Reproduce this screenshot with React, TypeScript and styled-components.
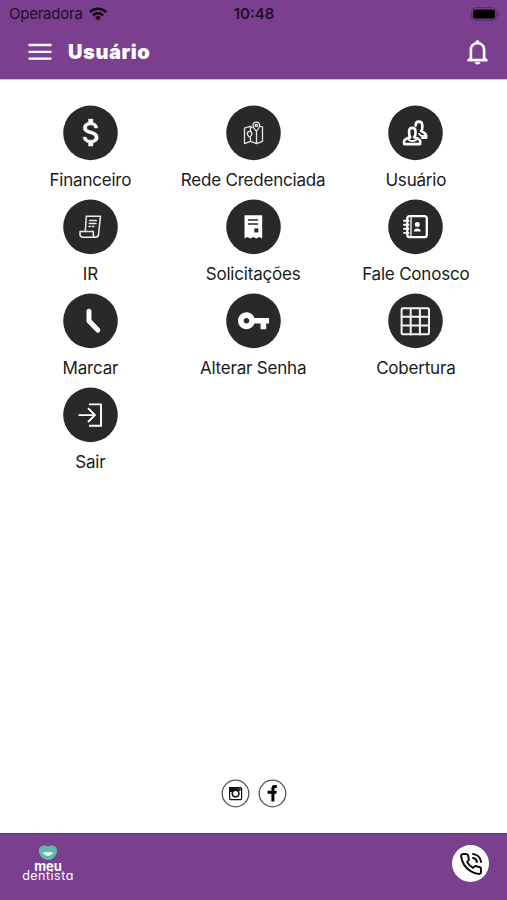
import React from "react";
import styled, { createGlobalStyle } from "styled-components";

const PURPLE = "#7b3f90";

const GlobalStyle = createGlobalStyle`
  * { box-sizing: border-box; }
  body { margin: 0; background: #fff; font-family: Inter, "Liberation Sans", sans-serif; }
  svg { display: block; flex: none; }
`;

const Screen = styled.div`
  width: 507px;
  height: 900px;
  display: flex;
  flex-direction: column;
  background: #fff;
  overflow: hidden;
`;

const Header = styled.header`
  height: 79px;
  flex: none;
  background: ${PURPLE};
  box-shadow: 0 1px 0 #d3bedb;
`;

const StatusBar = styled.div`
  height: 28px;
  padding: 0 7px 0 9px;
  display: grid;
  grid-template-columns: 1fr auto 1fr;
  align-items: center;
  color: #1f0d27;
`;

const Carrier = styled.div`
  display: flex;
  align-items: center;
  gap: 6px;
  font-size: 15px;
  line-height: 28px;
  letter-spacing: -0.24px;
`;

const Clock = styled.div`
  padding-right: 1px;
  font-size: 15px;
  font-weight: 600;
  line-height: 28px;
`;

const BatterySlot = styled.div`
  display: flex;
  justify-content: flex-end;
`;

const NavBar = styled.div`
  height: 48px;
  padding: 0 16px 0 28px;
  display: flex;
  align-items: center;
`;

const Title = styled.h1`
  flex: 1;
  margin: 0 0 0 16px;
  color: #fff;
  font-size: 20px;
  font-weight: 900;
  line-height: 24px;
  letter-spacing: 0.6px;
`;

const Menu = styled.main`
  flex: 1;
  padding: 26px 9.8px 0 9px;
  display: grid;
  grid-template-columns: repeat(3, 1fr);
  grid-auto-rows: 94px;
  align-content: start;
`;

const MenuItem = styled.div`
  display: flex;
  flex-direction: column;
  align-items: center;
`;

const Label = styled.span`
  margin-top: 7px;
  font-size: 17px;
  line-height: 24px;
  white-space: nowrap;
  color: #1a1a1a;
  letter-spacing: -0.2px;
`;

const Social = styled.div`
  display: flex;
  justify-content: center;
  gap: 8px;
  height: 54px;
  flex: none;
  padding-left: 1px;
`;

const Footer = styled.footer`
  height: 67px;
  flex: none;
  background: ${PURPLE};
  box-shadow: inset 0 1px 0 #6b3282;
  padding: 12px 18px 0 22px;
  display: flex;
  justify-content: space-between;
  align-items: flex-start;
`;

const Brand = styled.div`
  width: 52px;
  display: flex;
  flex-direction: column;
  align-items: center;
  color: #fff;
`;

const BrandLine = styled.span<{ $bold?: boolean }>`
  font-family: Inter, sans-serif;
  font-feature-settings: "cv11";
  font-size: ${(p) => (p.$bold ? 13 : 12.5)}px;
  font-weight: ${(p) => (p.$bold ? 700 : 400)};
  line-height: 10px;
  letter-spacing: ${(p) => (p.$bold ? 0 : 0.5)}px;
  white-space: nowrap;
`;

const CallButton = styled.button`
  width: 37px;
  height: 37px;
  padding: 0;
  border: 0;
  border-radius: 50%;
  background: #fff;
  display: flex;
  align-items: center;
  justify-content: center;
`;

const Disc = ({ children }: { children: React.ReactNode }) => (
  <svg width="55" height="56" viewBox="0 -0.4 55 56" fill="none" stroke="#fff" strokeWidth="1.3" strokeLinecap="round" strokeLinejoin="round">
    <circle cx="27.5" cy="27.5" r="27.3" fill="#292929" stroke="none" />
    {children}
  </svg>
);

const items: { label: string; icon: React.ReactNode }[] = [
  {
    label: "Financeiro",
    icon: (
      <path
        fill="#fff"
        strokeWidth="0.25"
        transform="translate(10.5 9.2) scale(1.5)"
        d="M11.8 10.9c-2.27-.59-3-1.2-3-2.15 0-1.09 1.01-1.85 2.7-1.85 1.78 0 2.44.85 2.5 2.1h2.21c-.07-1.72-1.12-3.3-3.21-3.81V3h-3v2.16c-1.94.42-3.5 1.68-3.5 3.61 0 2.31 1.91 3.46 4.7 4.13 2.5.6 3 1.48 3 2.41 0 .69-.49 1.79-2.7 1.79-2.06 0-2.87-.92-2.98-2.1h-2.2c.12 2.19 1.76 3.42 3.68 3.83V21h3v-2.15c1.95-.37 3.5-1.5 3.5-3.55 0-2.84-2.43-3.81-4.7-4.4z"
      />
    ),
  },
  {
    label: "Rede Credenciada",
    icon: (
      <g stroke="#e4e4e4" strokeWidth="1.3">
        <path d="M26 22l-2-1-5.5 1.8v15.4l6-2.2 6 2.2 6-2.2V21.5l-2-.5M24.5 21.5v4M24.5 32.5V36M30.5 26v12" />
        <path d="M30.3 25.8c-1.7-2-3.3-3.6-3.3-5.8a3.3 3.3 0 0 1 6.6 0c0 2.2-1.6 3.8-3.3 5.8z" />
        <circle cx="30.3" cy="20.2" r="1.1" />
        <path d="M23.6 32c-1.2-1.4-2.3-2.2-2.3-3.7a2.3 2.3 0 0 1 4.6 0c0 1.5-1.1 2.3-2.3 3.7z" />
      </g>
    ),
  },
  {
    label: "Usuário",
    icon: (
      <g strokeWidth="2.6">
        <path d="M27.6 20.2c0-2.7 1.4-4 3.3-4s3.4 1.4 3.4 4v2.2c0 1.6-.5 2.5-1.2 3.4 2.7 1.3 5 1.8 5 4.2v2.4h-3.8" />
        <path d="M31 28.5l2.2 2h4" strokeWidth="1.8" />
        <path d="M21.1 26.2c0-2.5 1.3-3.7 3.2-3.7s3.2 1.2 3.2 3.7v2c0 1.6-.5 2.7-1.3 3.6 3.6 1.3 6 1.8 6 4.1v2.8H16.1v-2.8c0-2.3 2.6-2.8 6.2-4.1-.8-.9-1.2-2-1.2-3.6z" />
        <path d="M20.5 34.3c2 1.8 6 1.8 8 0" strokeWidth="1.8" />
      </g>
    ),
  },
  {
    label: "IR",
    icon: (
      <g stroke="#eee" strokeWidth="1.5">
        <path d="M22.3 31.8l1-15H37.5l-2 18.5c-.2 1.8-1.3 2.5-3 2.5H20c-2 0-3-1-3-3v-2.6h13.3v3.3c0 1.5.7 2.3 2.2 2.3" />
        <path d="M26.5 21h6.8M26.2 24h6.8M26 27.2h1.3M29.3 27.2h1.5" />
      </g>
    ),
  },
  {
    label: "Solicitações",
    icon: (
      <>
        <path fill="#fff" stroke="none" d="M18.5 15.8h17.7V39l-3-1.5-3 1.5-2.9-1.5-2.9 1.5-3-1.5-2.9 1.5z" />
        <path d="M22.5 20.5h9M22.5 24.5h9" stroke="#292929" strokeWidth="1.5" />
        <path fill="#292929" stroke="none" d="M28.3 29h4v4h-4z" />
      </>
    ),
  },
  {
    label: "Fale Conosco",
    icon: (
      <>
        <rect x="19.3" y="16.8" width="19.5" height="21" rx="2.5" strokeWidth="2.3" />
        <path d="M16 21.3h4.5M16 25.3h4.5M16 29.4h4.5M16 33.5h4.5" strokeWidth="1.9" />
        <path d="M23 17v21" strokeWidth="1.3" />
        <circle cx="29.3" cy="25.2" r="2.5" fill="#fff" stroke="none" />
        <path d="M25.9 32c0-2.2 1.3-3 3.4-3s3.4.8 3.4 3z" fill="#fff" stroke="none" />
      </>
    ),
  },
  {
    label: "Marcar",
    icon: <path d="M26 17.8v9.7l8.8 9.2" strokeWidth="5" />,
  },
  {
    label: "Alterar Senha",
    icon: (
      <path
        fill="#fff"
        stroke="none"
        transform="translate(10.6 10.4) scale(1.41)"
        d="M12.65 10C11.83 7.67 9.61 6 7 6c-3.31 0-6 2.69-6 6s2.69 6 6 6c2.61 0 4.83-1.67 5.65-4H17v4h4v-4h2v-4H12.65zM7 14c-1.1 0-2-.9-2-2s.9-2 2-2 2 .9 2 2-.9 2-2 2z"
      />
    ),
  },
  {
    label: "Cobertura",
    icon: (
      <g strokeWidth="2" stroke="#f4f4f4">
        <rect x="13.6" y="14.8" width="27.4" height="26" rx="1.2" />
        <path d="M22.7 15v26M31.9 15v26M13.6 23.3H41M13.6 32.1H41" />
      </g>
    ),
  },
  {
    label: "Sair",
    icon: (
      <g strokeWidth="1.9" strokeLinecap="butt" strokeLinejoin="miter">
        <path d="M26 17h12v21.4H26" />
        <path d="M15.5 27.7H32M25 20.8l6.9 6.9-6.9 6.9" />
      </g>
    ),
  },
];

export default function App() {
  return (
    <>
      <GlobalStyle />
      <Screen>
        <Header>
          <StatusBar>
            <Carrier>
              Operadora
              <svg width="18" height="14" viewBox="0 0 18 14" fill="none" stroke="#100315" strokeWidth="2.5">
                <path d="M.8 5.2a11.7 11.7 0 0 1 16.4 0M3.8 8.4a7.5 7.5 0 0 1 10.4 0" />
                <path d="M9 13.4l-2.9-3a4.1 4.1 0 0 1 5.8 0z" fill="#100315" stroke="none" />
              </svg>
            </Carrier>
            <Clock>10:48</Clock>
            <BatterySlot>
              <svg width="30" height="14" viewBox="0 0 30 14">
                <rect x="1.4" y=".7" width="25" height="12.4" rx="3.8" fill="none" stroke="#552765" strokeWidth="1" />
                <rect x="3" y="2.4" width="22" height="9" rx="2.2" fill="#000" />
                <path d="M28 5v4q1.6-.6 1.6-2T28 5z" fill="#552765" />
              </svg>
            </BatterySlot>
          </StatusBar>
          <NavBar>
            <svg width="24" height="18" viewBox="0 0 24 18" stroke="#fff" strokeWidth="2.3">
              <path d="M.5 2h23M.5 8.8h23M.5 15.6h23" />
            </svg>
            <Title>Usuário</Title>
            <svg width="27" height="27" viewBox="0 0 27 27">
              <path
                fill="#fff"
                stroke="#fff"
                strokeWidth="0.4"
                fillRule="evenodd"
                d="M12 3.3V2.7a1.5 1.5 0 0 1 3 0v.6c4 .7 6.2 3.6 6.2 7.7v7.7l2.2 1.8v1.7H3.6v-1.7l2.2-1.8V11c0-4.1 2.2-7 6.2-7.7zM13.5 5.3C9.9 5.3 8 7.5 8 11v8.9h11V11c0-3.5-1.9-5.7-5.5-5.7zM10.9 23.3h5.2a2.6 2 0 0 1-5.2 0z"
              />
            </svg>
          </NavBar>
        </Header>
        <Menu>
          {items.map((item) => (
            <MenuItem key={item.label}>
              <Disc>{item.icon}</Disc>
              <Label>{item.label}</Label>
            </MenuItem>
          ))}
        </Menu>
        <Social>
          <svg width="29" height="29" viewBox="0 0 29 29">
            <circle cx="14.5" cy="14.5" r="13.3" fill="#fff" stroke="#555" strokeWidth="1.3" />
            <rect x="8.6" y="8.6" width="12" height="12" rx="1" fill="#fff" stroke="#111" strokeWidth="1.2" />
            <path d="M8 8h9v5H8z" fill="#111" />
            <circle cx="14.6" cy="14.6" r="3.3" fill="#fff" stroke="#111" strokeWidth="1.6" />
            <rect x="17.2" y="9.3" width="2.5" height="2.5" fill="#111" />
          </svg>
          <svg width="29" height="29" viewBox="0 0 29 29">
            <circle cx="14.5" cy="14.5" r="13.3" fill="#fff" stroke="#555" strokeWidth="1.3" />
            <path
              d="M18.8 7.6h-1.8c-1.3 0-2.1.7-2.1 1.9v2.6M9.6 13.3h9M14.9 12v10.4"
              fill="none"
              stroke="#000"
              strokeWidth="3"
            />
          </svg>
        </Social>
        <Footer>
          <Brand>
            <svg width="20" height="16" viewBox="0 0 20 16">
              <path d="M10 1.8C8 .4 5.6.2 3.8 1 1 2.3.2 5.2 1.3 8c1.5 4 4.3 7 8.7 7s7.2-3 8.7-7c1.1-2.8.3-5.7-2.5-7-1.8-.8-4.2-.6-6.2.8z" fill="#62b6aa" />
              <path d="M5.2 7.3h9.6c-.5 2.3-2.3 3.5-4.8 3.5s-4.3-1.2-4.8-3.5z" fill="#fff" />
            </svg>
            <BrandLine $bold>meu</BrandLine>
            <BrandLine>dentista</BrandLine>
          </Brand>
          <CallButton aria-label="Ligar">
            <svg width="24" height="24" viewBox="0 0 24 24" fill="none" stroke="#111" strokeWidth="2" strokeLinecap="round" strokeLinejoin="round">
              <path d="M14.05 2a9 9 0 0 1 8 7.94M14.05 6A5 5 0 0 1 18 10" />
              <path d="M22 16.92v3a2 2 0 0 1-2.18 2 19.79 19.79 0 0 1-8.63-3.07 19.5 19.5 0 0 1-6-6 19.79 19.79 0 0 1-3.07-8.67A2 2 0 0 1 4.11 2h3a2 2 0 0 1 2 1.72 12.84 12.84 0 0 0 .7 2.81 2 2 0 0 1-.45 2.11L8.09 9.91a16 16 0 0 0 6 6l1.27-1.27a2 2 0 0 1 2.11-.45 12.84 12.84 0 0 0 2.81.7A2 2 0 0 1 22 16.92z" />
            </svg>
          </CallButton>
        </Footer>
      </Screen>
    </>
  );
}
